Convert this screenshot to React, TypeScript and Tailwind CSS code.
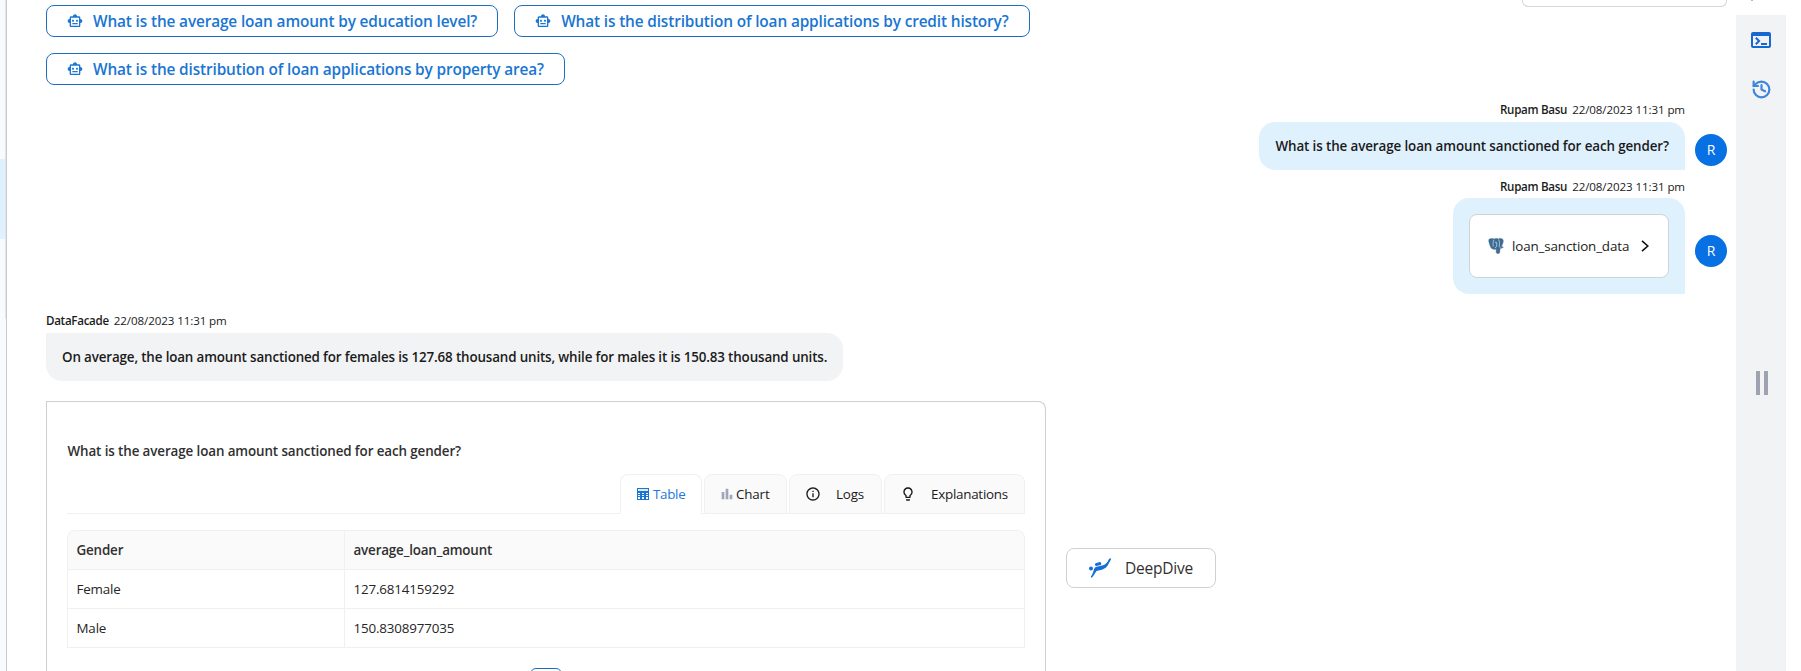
import type { ReactNode } from "react";
import { History } from "lucide-react";
import {
  MdBarChart,
  MdInfoOutline,
  MdOutlineLightbulb,
  MdOutlineSmartToy,
  MdTerminal,
} from "react-icons/md";

function Suggestion({ children }: { children: ReactNode }) {
  return (
    <button className="flex h-8 shrink-0 items-center gap-2.5 rounded-lg border border-[#1f6fc0] bg-white px-5 text-[15.4px] font-semibold tracking-[-0.145px] whitespace-nowrap text-[#1976d2]">
      <MdOutlineSmartToy className="size-4 shrink-0" />
      <span className="pt-px">{children}</span>
    </button>
  );
}

function MessageMeta({ name }: { name: string }) {
  return (
    <div className="flex h-[22px] items-center gap-[5px] text-[11.6px] leading-[22px] whitespace-nowrap text-[#1b1b1b]">
      <span className="font-semibold tracking-[-0.3px]">{name}</span>
      <span className="tracking-[-0.11px]">22/08/2023 11:31 pm</span>
    </div>
  );
}

function Avatar() {
  return (
    <div className="flex size-8 shrink-0 items-center justify-center rounded-full bg-[#0770e3] text-sm text-white">
      R
    </div>
  );
}

function ElephantIcon() {
  return (
    <svg viewBox="0 0 16 16" className="size-4 shrink-0">
      <path
        d="M1 1.2C3 .2 5 .5 6.300 1 8 .3 9.500.6 10.500.9c1.700-.7 3.600-.3 4.600.8.6 1.800-.6 4.600-1.600 6.700.7.4 1.500.3 1.900.6-.5 1-2 1.200-3.200 1.200-.3 1.600-.2 3.400-.7 4.700-.8 1-2.600.9-3.200-.2-.3-1.500 0-2.700-.2-3.900-1 .8-2 .9-2.900.3C3.300 11.400 2.300 8.700 1.500 6.100 1 4.300.4 2.500 1 1.200Z"
        fill="#3a6c96"
        stroke="#5d7385"
        strokeWidth=".5"
      />
      <path
        d="M5.900 1.800C4.900 3.500 5 6 5.200 8.500M10.600 1.500c1 1.700 1.200 4 .6 6.700M7 4.500c.6-.4 1.300-.4 1.700 0v4.300M6.800 9.800l1.600-.9M11.200 8.600l1.400.9"
        fill="none"
        stroke="#c3d5e3"
        strokeWidth=".8"
      />
    </svg>
  );
}

function TableIcon() {
  return (
    <svg viewBox="0 0 12 12" className="size-3 shrink-0" shapeRendering="crispEdges">
      <rect width="12" height="12" fill="#1976d2" />
      <rect x="1" y="1" width="10" height="2" fill="#dcecfb" />
      <path
        d="M1 5h2v1H1zM5 5h2v1H5zM9 5h2v1H9zM1 7h2v1H1zM5 7h2v1H5zM9 7h2v1H9zM1 9h2v2H1zM5 9h2v2H5zM9 9h2v2H9z"
        fill="#fff"
      />
    </svg>
  );
}

function DiverIcon() {
  return (
    <svg viewBox="0 0 22 20" className="h-5 w-[22px] shrink-0" fill="#176fd3">
      <circle cx="2" cy="10.600" r="2" />
      <rect x="6" y="4.600" width="6.200" height="3" rx="1" transform="rotate(-14 9 6.100)" />
      <path d="M5.300 10.600c.7-1.500 2-1.800 3.500-2.100 3-.6 5.700-.9 7.700-2.500L18.800 3.500C19.600 1.500 20.500.4 21.600.1c.6.6.2 1.800-.3 2.700L18.500 7.800c-1.300 2.200-3.700 3.300-6.500 4.300-1.500.5-3.500.6-4.700 1.200L4.600 17.600c-.6 1-1.600 2.100-2.700 2.100-.3-1 .4-1.800.9-2.400 1-1.500 1.700-4.300 2.500-6.700Z" />
    </svg>
  );
}

function Tab({ children, className }: { children: ReactNode; className: string }) {
  return (
    <div
      className={`-mb-px flex h-10 items-center rounded-t-lg border border-[#f0f0f0] text-[13.4px] ${className}`}
    >
      {children}
    </div>
  );
}

const rows = [
  ["Female", "127.6814159292"],
  ["Male", "150.8308977035"],
];

export default function App() {
  return (
    <div className="flex h-[671px] w-full overflow-hidden bg-white font-['Open_Sans','Noto_Sans',sans-serif] text-[#1b1b1b]">
      <aside className="flex w-[7px] shrink-0 border-r border-[#c8cbd6] bg-[#f9fafc]">
        <div className="h-[319px] w-full border-r border-[#e3e5ec] pt-[159px]">
          <div className="h-20 bg-[#dff1fe]" />
        </div>
      </aside>

      <main className="flex min-w-0 flex-1 flex-col pl-[39px]">
        <div className="flex h-[85px] shrink-0 items-start justify-between pr-[9px]">
          <div className="flex w-[1100px] flex-wrap gap-4 pt-[5px]">
            <Suggestion>What is the average loan amount by education level?</Suggestion>
            <Suggestion>What is the distribution of loan applications by credit history?</Suggestion>
            <Suggestion>What is the distribution of loan applications by property area?</Suggestion>
          </div>
          <div className="h-[7px] w-[205px] rounded-b-md border border-t-0 border-[#d4d6d9]" />
        </div>

        <section className="mt-[14px] flex shrink-0 justify-end gap-2.5 pr-[9px]">
          <div className="flex flex-col items-end">
            <MessageMeta name="Rupam Basu" />
            <div className="mt-px flex h-12 items-center rounded-2xl rounded-br-none bg-[#e0f1fe] px-4 text-[13.4px] font-semibold tracking-[-0.11px] whitespace-nowrap">
              What is the average loan amount sanctioned for each gender?
            </div>
          </div>
          <div className="pt-[35px]">
            <Avatar />
          </div>
        </section>

        <section className="mt-[6px] flex shrink-0 justify-end gap-2.5 pr-[9px]">
          <div className="flex flex-col items-end">
            <MessageMeta name="Rupam Basu" />
            <div className="h-24 w-[232px] rounded-2xl rounded-br-none bg-[#e0f1fe] p-4">
              <div className="flex h-16 w-full items-center rounded-lg border border-[#cdd3d9] bg-white pl-[18px] text-[13.4px]">
                <ElephantIcon />
                <span className="ml-2 tracking-[-0.13px]">loan_sanction_data</span>
                <svg viewBox="0 0 8 12" className="ml-3 h-3 w-2" fill="none" stroke="#111" strokeWidth="1.6">
                  <path d="M1 .8 6.800 6 1 11.200" />
                </svg>
              </div>
            </div>
          </div>
          <div className="pt-[59px]">
            <Avatar />
          </div>
        </section>

        <section className="mt-4 flex shrink-0 flex-col items-start">
          <MessageMeta name="DataFacade" />
          <div className="mt-px flex h-12 items-center rounded-2xl rounded-tl-none bg-[#f2f3f5] px-4 text-[13.4px] font-semibold tracking-[-0.146px] whitespace-nowrap">
            On average, the loan amount sanctioned for females is 127.68 thousand units, while for males it is 150.83
            thousand units.
          </div>
        </section>

        <section className="mt-5 flex min-h-0 flex-1 items-start gap-5">
          <div className="h-full w-[1000px] overflow-hidden rounded-tr-lg border border-b-0 border-[#cfcfcf] px-5 pt-[38px]">
            <h2 className="h-[34px] pl-[0.5px] text-[13.4px] leading-[22px] font-semibold tracking-[-0.11px] text-[#303030]">
              What is the average loan amount sanctioned for each gender?
            </h2>
            <div className="flex justify-end gap-0.5 border-b border-[#f0f0f0]">
              <Tab className="w-[82px] gap-1 border-b-white bg-white pl-4 tracking-[-0.3px] text-[#1f78dc]">
                <TableIcon />
                <span>Table</span>
              </Tab>
              <Tab className="w-[83px] bg-[#fafafa] pl-3.5 tracking-[-0.17px]">
                <MdBarChart className="size-4 text-[#9fa6b5]" />
                <span className="ml-px">Chart</span>
              </Tab>
              <Tab className="w-[93px] bg-[#fafafa] pl-[15px] tracking-[-0.17px]">
                <MdInfoOutline className="size-4" />
                <span className="ml-[15px]">Logs</span>
              </Tab>
              <Tab className="w-[141px] bg-[#fafafa] pl-[15px] tracking-[-0.25px]">
                <MdOutlineLightbulb className="size-4" />
                <span className="ml-[15px]">Explanations</span>
              </Tab>
            </div>
            <div className="mt-4 overflow-hidden rounded-t-lg border border-b-0 border-[#f0f0f0] text-[13.4px] tracking-[-0.17px]">
              <div className="grid h-[39px] grid-cols-[277px_1fr] border-b border-[#f0f0f0] bg-[#fafafa] font-semibold text-[#303030]">
                <div className="flex items-center border-r border-[#f0f0f0] pl-[8.5px]">Gender</div>
                <div className="flex items-center pl-[8.5px]">average_loan_amount</div>
              </div>
              {rows.map(([gender, amount]) => (
                <div
                  key={gender}
                  className="grid h-[39px] grid-cols-[277px_1fr] border-b border-[#f0f0f0] text-[#262626]"
                >
                  <div className="flex items-center border-r border-[#f0f0f0] pl-[8.5px]">{gender}</div>
                  <div className="flex items-center pl-[8.5px]">{amount}</div>
                </div>
              ))}
            </div>
            <div className="mt-5 ml-[463px] h-8 w-8 rounded-md border border-[#1f6fc0]" />
          </div>
          <div className="mt-[147px] flex h-10 w-[150px] items-center rounded-lg border border-[#d0d0d0] pl-[22px] text-[15.5px] text-[#303030]">
            <DiverIcon />
            <span className="ml-3.5 pt-px tracking-[-0.22px]">DeepDive</span>
          </div>
        </section>
      </main>

      <aside className="mr-[15px] flex w-[50px] shrink-0 flex-col">
        <div className="h-[15px] pl-[15px]">
          <div className="h-px w-0.5 bg-[#8fc1ec]" />
        </div>
        <div className="flex flex-1 flex-col items-center bg-[#f2f3f5] pt-[13px]">
          <MdTerminal className="size-6 text-[#1769d2]" />
          <History className="mt-[27px] size-[21px] text-[#3d86dc]" strokeWidth={2.5} />
          <div className="mt-[271px] ml-0.5 flex gap-1">
            <div className="h-6 w-1 bg-[#9ea3b1]" />
            <div className="h-6 w-1 bg-[#9ea3b1]" />
          </div>
        </div>
      </aside>
    </div>
  );
}
